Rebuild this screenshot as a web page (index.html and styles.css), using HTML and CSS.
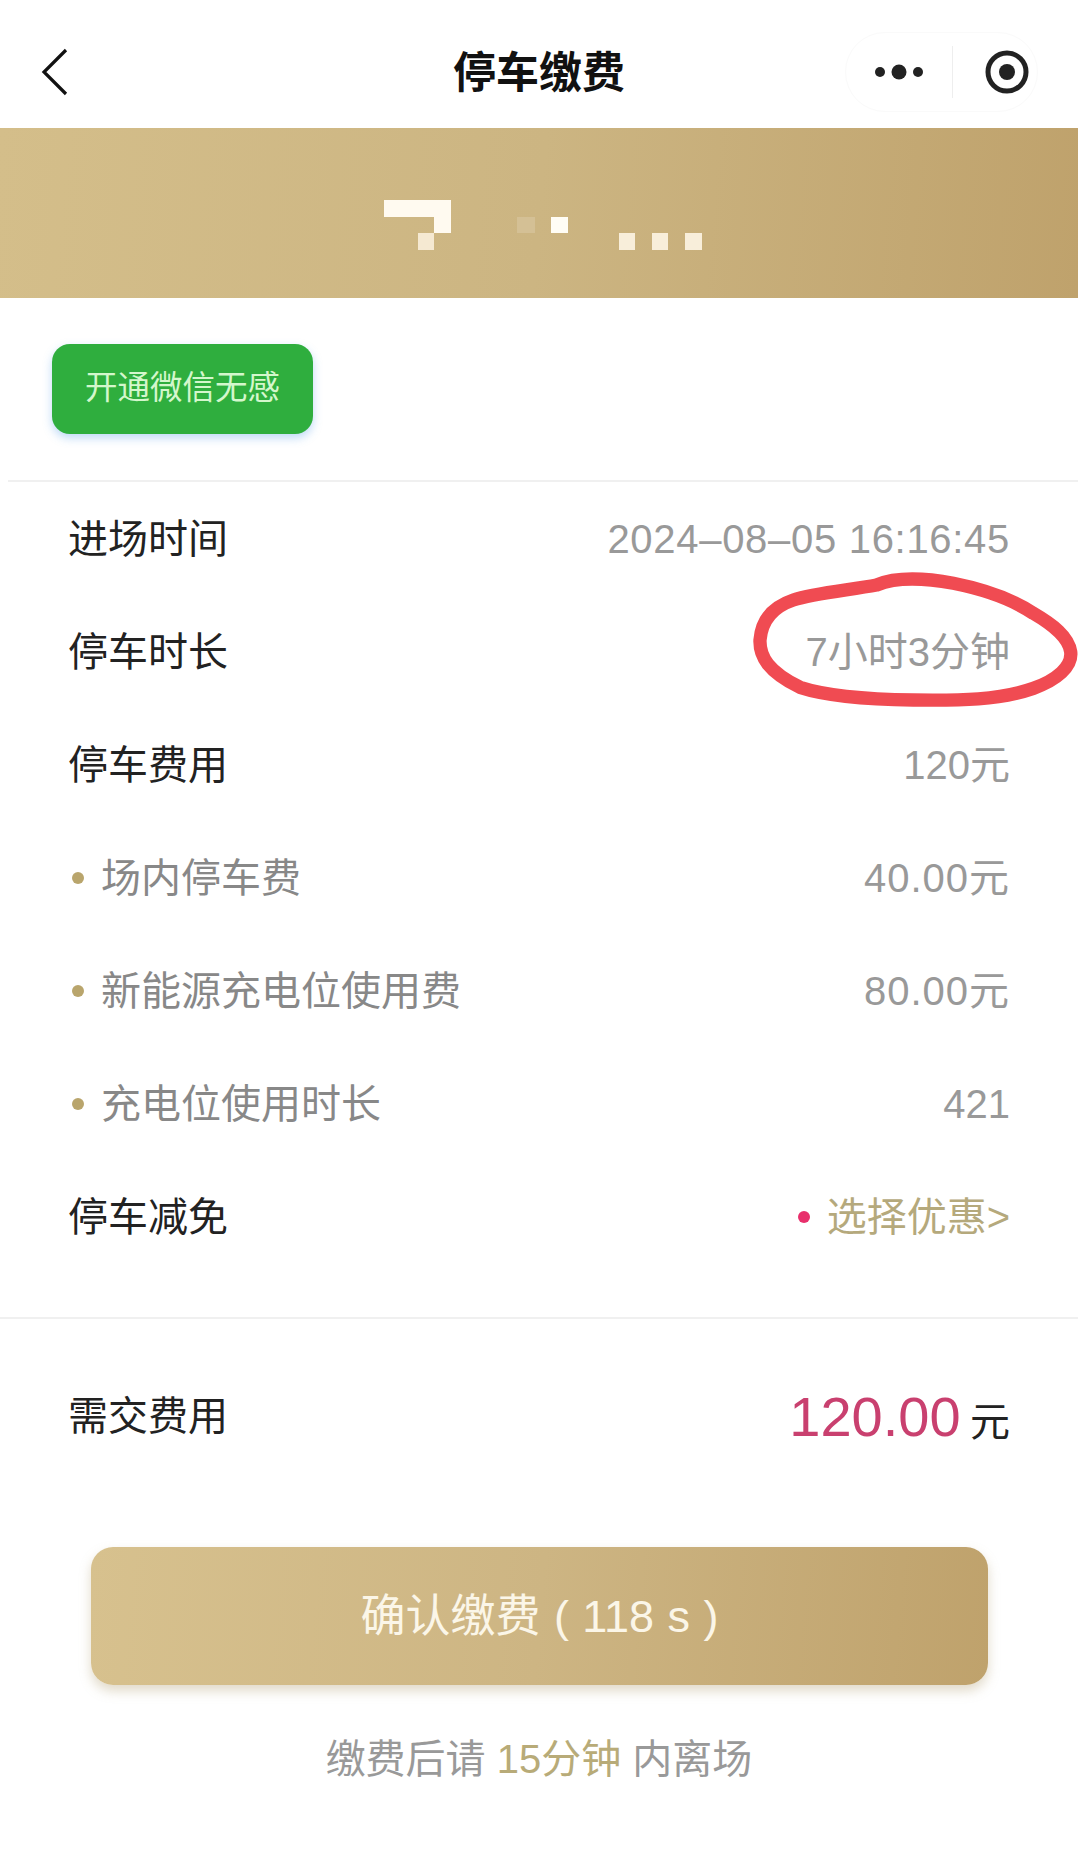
FILE: index.html
```html
<!DOCTYPE html>
<html lang="zh-CN">
<head>
  <meta charset="utf-8"/>
  <meta name="viewport" content="width=device-width, initial-scale=1.0">
  <title>停车缴费</title>
  <link rel="stylesheet" href="styles.css">
</head>
<body>
  <header class="nav">
    <svg class="back" width="28" height="48" viewBox="0 0 28 48">
      <path d="M26 2 L4 24 L26 46" fill="none" stroke="#111" stroke-width="3.2"/>
    </svg>
    <h1 class="title">停车缴费</h1>
    <div class="capsule">
      <svg class="dots" width="52" height="20" viewBox="0 0 52 20">
        <circle cx="6" cy="10" r="5" fill="#222"/>
        <circle cx="25" cy="10" r="7.5" fill="#222"/>
        <circle cx="44" cy="10" r="5" fill="#222"/>
      </svg>
      <span class="capsule-line"></span>
      <svg class="target" width="44" height="44" viewBox="0 0 44 44">
        <circle cx="22" cy="22" r="19" fill="none" stroke="#222" stroke-width="5"/>
        <circle cx="22" cy="22" r="8" fill="#222"/>
      </svg>
    </div>
  </header>

  <div class="banner">
    <!-- plate number, pixelated in the source -->
    <svg class="plate" width="1078" height="170" viewBox="0 0 1078 170">
      <rect x="384" y="72" width="67" height="17" fill="#fffaf0"/>
      <rect x="434" y="89" width="17" height="16" fill="#fffaf0"/>
      <rect x="418" y="105" width="16" height="17" fill="#f5e9d2"/>
      <rect x="517" y="89" width="18" height="16" fill="#d4c095"/>
      <rect x="551" y="89" width="17" height="16" fill="#fffdf5"/>
      <rect x="619" y="105" width="16" height="17" fill="#f8eeda"/>
      <rect x="652" y="105" width="16" height="17" fill="#f8eeda"/>
      <rect x="685" y="105" width="17" height="17" fill="#f8eeda"/>
    </svg>
  </div>

  <div class="wx-wrap">
    <button type="button" class="wx-btn">开通微信无感</button>
  </div>

  <div class="list">
    <div class="row">
      <span class="label">进场时间</span>
      <span class="value date">2024–08–05 16:16:45</span>
    </div>
    <div class="row">
      <span class="label">停车时长</span>
      <span class="value">7小时3分钟</span>
      <svg class="circled" width="378" height="180" viewBox="0 0 1134 540">
        <path d="M530 105 C450 120 340 130 280 150 C220 170 185 210 180 270 C178 320 205 365 300 412 C370 435 500 448 640 450 C780 452 900 450 1000 415 C1070 390 1118 350 1112 305 C1105 260 1060 225 1000 190 C940 150 860 120 760 100 C680 85 590 80 530 105 Z" fill="none" stroke="#f04b52" stroke-width="40" stroke-linejoin="round"/>
      </svg>
    </div>
    <div class="row">
      <span class="label">停车费用</span>
      <span class="value">120元</span>
    </div>
    <div class="row">
      <span class="label sub">场内停车费</span>
      <span class="value money">40.00元</span>
    </div>
    <div class="row">
      <span class="label sub">新能源充电位使用费</span>
      <span class="value money">80.00元</span>
    </div>
    <div class="row">
      <span class="label sub">充电位使用时长</span>
      <span class="value">421</span>
    </div>
    <div class="row">
      <span class="label">停车减免</span>
      <span class="value coupon">选择优惠&gt;</span>
    </div>
  </div>

  <div class="total">
    <span class="label">需交费用</span>
    <span class="amount"><b>120.00</b> <i>元</i></span>
  </div>

  <button type="button" class="pay-btn">确认缴费 ( 118 s )</button>

  <p class="tip">缴费后请 <span class="tip-gold">15分钟</span> 内离场</p>
</body>
</html>
```

FILE: styles.css
```css
body {
  font-family: "Liberation Sans", "Noto Sans CJK SC", sans-serif;
  background-color: #fff;
  color: #222;
  margin: 0;
  overflow: hidden;
}

.nav {
  height: 128px;
  display: grid;
  grid-template-columns: 1fr auto 1fr;
  align-items: center;
  padding: 0 40px;
  box-sizing: border-box;
}

.back {
  margin-top: 16px;
}

.title {
  margin: 18px 0 0;
  font-size: 43px;
  font-weight: 700;
  color: #111;
  line-height: 1;
}

.capsule {
  justify-self: end;
  width: 193px;
  height: 80px;
  margin-top: 16px;
  border: 1px solid #fafafa;
  border-radius: 40px;
  box-sizing: border-box;
  display: flex;
  align-items: center;
}

.dots {
  margin-left: 28px;
}

.capsule-line {
  width: 1px;
  height: 52px;
  margin: 0 32px 0 26px;
  background: #eee;
}

.banner {
  height: 170px;
  background: linear-gradient(95deg, #d4be8a 0%, #ccb582 50%, #bfa26c 100%);
}

.plate {
  display: block;
}

.wx-wrap {
  margin-left: 8px;
  padding: 46px 44px;
  border-bottom: 2px solid #f0f0f0;
}

.wx-btn {
  display: block;
  width: 261px;
  height: 90px;
  padding: 0 0 2px;
  border: none;
  border-radius: 18px;
  background: #2fae3e;
  color: #d4f7cc;
  font-family: inherit;
  font-size: 32.5px;
  line-height: 40px;
  box-shadow: 0 4px 10px rgba(70, 150, 230, 0.35);
}

.list {
  padding-bottom: 44px;
  border-bottom: 2px solid #f0f0f0;
}

.row {
  position: relative;
  height: 113px;
  padding: 0 68px 0 68px;
  display: flex;
  justify-content: space-between;
  align-items: center;
  font-size: 40px;
  line-height: 50px;
}

.label {
  font-size: 40px;
  color: #222;
}

.label.sub {
  display: flex;
  align-items: center;
  margin-left: 4px;
  color: #888;
}

.label.sub::before {
  content: "";
  width: 12px;
  height: 12px;
  margin-right: 17px;
  border-radius: 50%;
  background: #b9a56c;
}

.value {
  color: #999;
}

.value.date {
  letter-spacing: 0.7px;
}

.value.money {
  letter-spacing: 1px;
}

.value.coupon {
  display: flex;
  align-items: center;
  color: #b5a97c;
}

.value.coupon::before {
  content: "";
  width: 12px;
  height: 12px;
  margin-right: 17px;
  border-radius: 50%;
  background: #e8306c;
}

.circled {
  position: absolute;
  right: 0;
  top: -45px;
  pointer-events: none;
}

.total {
  height: 194px;
  padding: 0 68px 0 68px;
  display: flex;
  justify-content: space-between;
  align-items: center;
  line-height: 60px;
}

.amount {
  padding-top: 16px;
}

.amount b {
  font-size: 56px;
  font-weight: 400;
  color: #c9406f;
}

.amount i {
  margin-left: 5px;
  font-size: 40px;
  font-style: normal;
  color: #222;
}

.pay-btn {
  display: block;
  width: 897px;
  height: 138px;
  margin: 34px 0 0 91px;
  padding: 1px 0 0;
  border: none;
  border-radius: 22px;
  background: linear-gradient(95deg, #d7c18e 0%, #cdb583 50%, #bfa26c 100%);
  color: #fbf6e8;
  font-family: inherit;
  font-size: 45px;
  line-height: 50px;
  word-spacing: 1px;
  box-shadow: 0 6px 12px rgba(170, 150, 100, 0.35);
}

.tip {
  margin: 44px 0 0;
  text-align: center;
  font-size: 40px;
  line-height: 60px;
  color: #999;
}

.tip-gold {
  color: #b8ab78;
}
```
